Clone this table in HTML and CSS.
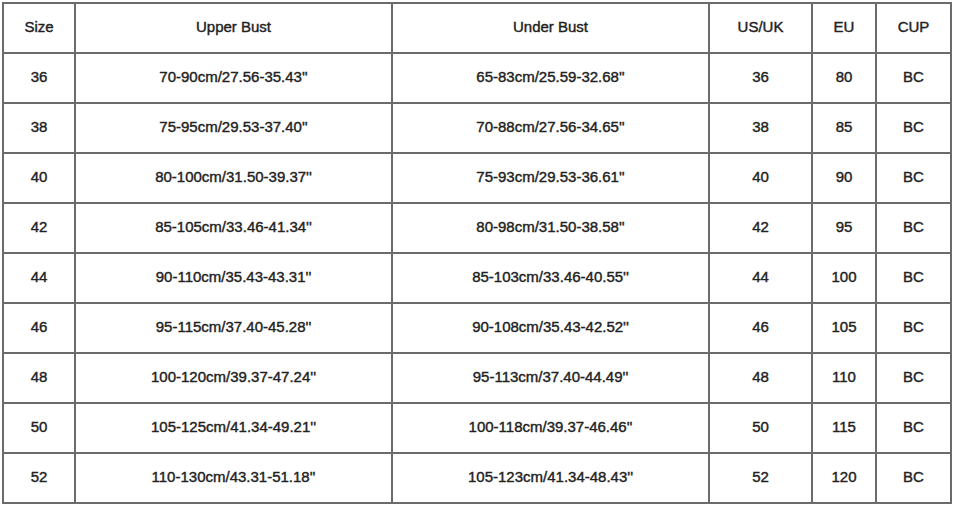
FILE: index.html
```html
<!DOCTYPE html>
<html>
<head>
<meta charset="utf-8">
<link rel="stylesheet" href="styles.css">
</head>
<body>
<div class="chart">
  <div class="cell">Size</div><div class="cell">Upper Bust</div><div class="cell">Under Bust</div><div class="cell">US/UK</div><div class="cell">EU</div><div class="cell">CUP</div>
  <div class="cell">36</div><div class="cell">70-90cm/27.56-35.43''</div><div class="cell">65-83cm/25.59-32.68''</div><div class="cell">36</div><div class="cell">80</div><div class="cell">BC</div>
  <div class="cell">38</div><div class="cell">75-95cm/29.53-37.40''</div><div class="cell">70-88cm/27.56-34.65''</div><div class="cell">38</div><div class="cell">85</div><div class="cell">BC</div>
  <div class="cell">40</div><div class="cell">80-100cm/31.50-39.37''</div><div class="cell">75-93cm/29.53-36.61''</div><div class="cell">40</div><div class="cell">90</div><div class="cell">BC</div>
  <div class="cell">42</div><div class="cell">85-105cm/33.46-41.34''</div><div class="cell">80-98cm/31.50-38.58''</div><div class="cell">42</div><div class="cell">95</div><div class="cell">BC</div>
  <div class="cell">44</div><div class="cell">90-110cm/35.43-43.31''</div><div class="cell">85-103cm/33.46-40.55''</div><div class="cell">44</div><div class="cell">100</div><div class="cell">BC</div>
  <div class="cell">46</div><div class="cell">95-115cm/37.40-45.28''</div><div class="cell">90-108cm/35.43-42.52''</div><div class="cell">46</div><div class="cell">105</div><div class="cell">BC</div>
  <div class="cell">48</div><div class="cell">100-120cm/39.37-47.24''</div><div class="cell">95-113cm/37.40-44.49''</div><div class="cell">48</div><div class="cell">110</div><div class="cell">BC</div>
  <div class="cell">50</div><div class="cell">105-125cm/41.34-49.21''</div><div class="cell">100-118cm/39.37-46.46''</div><div class="cell">50</div><div class="cell">115</div><div class="cell">BC</div>
  <div class="cell">52</div><div class="cell">110-130cm/43.31-51.18''</div><div class="cell">105-123cm/41.34-48.43''</div><div class="cell">52</div><div class="cell">120</div><div class="cell">BC</div>
</div>
</body>
</html>
```
FILE: styles.css
```css
html, body {
  margin: 0;
  padding: 0;
  background: #ffffff;
}
body {
  padding: 2px;
  font-family: "Liberation Sans", Arial, sans-serif;
}
.chart {
  display: grid;
  grid-template-columns: 72px 317px 317px 103px 64px 75px;
  grid-auto-rows: 50px;
  width: 948px;
  border-left: 2px solid #6b6b6b;
  border-top: 2px solid #6b6b6b;
}
.cell {
  display: flex;
  align-items: center;
  justify-content: center;
  padding-bottom: 3px;
  border-right: 2px solid #6b6b6b;
  border-bottom: 2px solid #6b6b6b;
  font-size: 15px;
  font-weight: normal;
  -webkit-text-stroke: 0.4px #222222;
  color: #222222;
  white-space: nowrap;
}
```
